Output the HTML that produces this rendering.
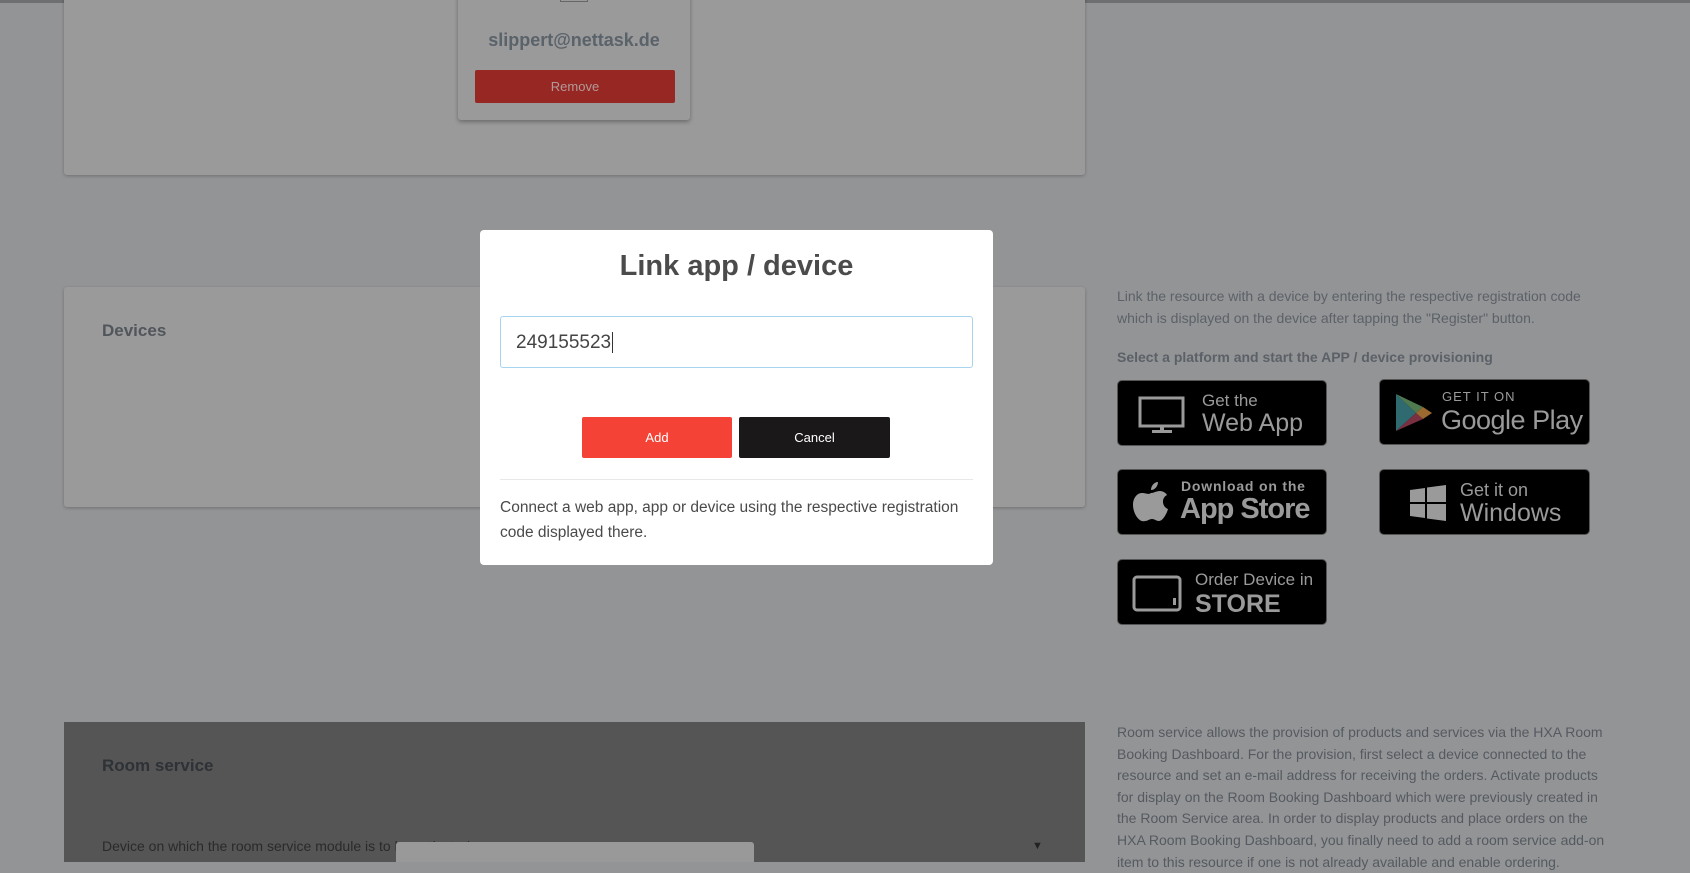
<!DOCTYPE html>
<html><head><meta charset="utf-8"><style>
*{box-sizing:border-box;margin:0;padding:0}
body{width:1690px;height:856px;overflow:hidden;background:#939496;font-family:"Liberation Sans",Roboto,sans-serif;position:relative}
.a{position:absolute}
.card{background:#9a9a9a;border-radius:3px;box-shadow:0 1px 3px rgba(0,0,0,.25)}
.badge{position:absolute;background:#000;border-radius:5px;border:1px solid #555;color:#9a9a9a;font-family:"Liberation Sans",sans-serif;white-space:nowrap}
.badge div{white-space:nowrap}
.rt{color:#5c6168;font-size:14px;line-height:21.6px}
</style></head><body>
<div class="a" style="left:0;top:0;width:1690px;height:3px;background:#6e6f71"></div>
<div class="a card" style="left:64px;top:-10px;width:1021px;height:185px"></div>
<div class="a card" style="left:458px;top:-10px;width:232px;height:130px;box-shadow:0 2px 4px rgba(0,0,0,.3)"></div>
<div class="a" style="left:560px;top:-2px;width:28px;height:4px;border:1px solid #666;border-top:none"></div>
<div class="a" style="left:458px;top:30px;width:232px;text-align:center;font-size:18px;font-weight:bold;color:#5a626a">slippert@nettask.de</div>
<div class="a" style="left:475px;top:70px;width:200px;height:33px;background:#962723;border-radius:2px;color:#b39a98;font-size:13px;text-align:center;line-height:33px">Remove</div>

<div class="a card" style="left:64px;top:287px;width:1021px;height:220px"></div>
<div class="a" style="left:102px;top:321px;font-size:17px;font-weight:bold;color:#50565c">Devices</div>

<div class="a" style="left:64px;top:722px;width:1021px;height:140px;background:#555"></div>
<div class="a" style="left:102px;top:756px;font-size:17px;font-weight:bold;color:#2e3236">Room service</div>
<div class="a" style="left:102px;top:838px;font-size:14px;color:#2a2a2a">Device on which the room service module is to be activated</div>
<div class="a" style="left:1032px;top:840px;font-size:11px;color:#222">▼</div>
<div class="a" style="left:396px;top:842px;width:358px;height:20px;background:#999;border-radius:3px 3px 0 0"></div>

<div class="a rt" style="left:1117px;top:286px;width:500px">Link the resource with a device by entering the respective registration code which is displayed on the device after tapping the "Register" button.</div>
<div class="a rt" style="left:1117px;top:347px;font-weight:bold">Select a platform and start the APP / device provisioning</div>

<div class="badge" style="left:1117px;top:380px;width:210px;height:66px">
<svg class="a" style="left:20px;top:15px" width="48" height="38" viewBox="0 0 48 38"><rect x="2" y="2" width="43" height="28" fill="none" stroke="#9a9a9a" stroke-width="3"/><rect x="22" y="30" width="4" height="4" fill="#9a9a9a"/><rect x="14" y="34" width="20" height="3" fill="#9a9a9a"/></svg>
<div class="a" style="left:84px;top:10px;font-size:17px">Get the</div>
<div class="a" style="left:84px;top:28px;font-size:25px">Web App</div></div>

<div class="badge" style="left:1379px;top:379px;width:211px;height:66px">
<svg class="a" style="left:14px;top:12px" width="40" height="42" viewBox="0 0 40 42"><polygon points="2,2 2,39 22,21" fill="#2e6a70"/><polygon points="2,2 22,21 29,15" fill="#4f7a50"/><polygon points="2,39 22,21 29,27" fill="#7a3040"/><polygon points="22,21 29,15 38,21 29,27" fill="#9a6a30"/></svg>
<div class="a" style="left:62px;top:9px;font-size:13px;letter-spacing:1px">GET IT ON</div>
<div class="a" style="left:61px;top:25px;font-size:27px;letter-spacing:-.5px">Google Play</div></div>

<div class="badge" style="left:1117px;top:469px;width:210px;height:66px">
<svg class="a" style="left:15px;top:10px" width="36" height="44" viewBox="0 0 36 44"><path d="M25 2c0 4-3 8-7 8 0-4 3-8 7-8zM18 13c3 0 5-2 9-2 3 0 6 2 7 4-6 3-5 12 1 14-1 4-5 12-9 12-3 0-4-2-7-2s-4 2-7 2C6 43 0 33 0 25c0-7 4-12 9-12 4 0 6 2 9 0z" fill="#9a9a9a"/></svg>
<div class="a" style="left:63px;top:8px;font-size:14px;letter-spacing:.8px;font-weight:bold">Download on the</div>
<div class="a" style="left:62px;top:23px;font-size:29px;font-weight:bold;letter-spacing:-1px">App Store</div></div>

<div class="badge" style="left:1379px;top:469px;width:211px;height:66px">
<svg class="a" style="left:30px;top:15px" width="37" height="37" viewBox="0 0 37 37"><path d="M0 5l15-2v14H0zM17 2.5L36 0v17H17zM0 19h15v14L0 31zM17 19h19v17l-19-2.5z" fill="#9a9a9a"/></svg>
<div class="a" style="left:80px;top:10px;font-size:18px">Get it on</div>
<div class="a" style="left:80px;top:29px;font-size:25px">Windows</div></div>

<div class="badge" style="left:1117px;top:559px;width:210px;height:66px">
<svg class="a" style="left:14px;top:15px" width="52" height="38" viewBox="0 0 52 38"><rect x="2" y="2" width="46" height="33" rx="3" fill="none" stroke="#9a9a9a" stroke-width="3"/><rect x="41" y="23" width="3" height="7" fill="#9a9a9a"/></svg>
<div class="a" style="left:77px;top:10px;font-size:17px">Order Device in</div>
<div class="a" style="left:77px;top:30px;font-size:25px;font-weight:bold">STORE</div></div>

<div class="a rt" style="left:1117px;top:722px;width:490px;color:#555a60">Room service allows the provision of products and services via the HXA Room Booking Dashboard. For the provision, first select a device connected to the resource and set an e-mail address for receiving the orders. Activate products for display on the Room Booking Dashboard which were previously created in the Room Service area. In order to display products and place orders on the HXA Room Booking Dashboard, you finally need to add a room service add-on item to this resource if one is not already available and enable ordering.</div>

<div class="a" style="left:480px;top:230px;width:513px;height:335px;background:#fff;border-radius:4px">
<div class="a" style="left:0;top:20px;width:513px;text-align:center;font-size:29px;font-weight:bold;color:#4b4b4b">Link app / device</div>
<div class="a" style="left:20px;top:86px;width:473px;height:52px;border:1px solid #a8d4f0;border-radius:3px;font-size:19px;color:#444;padding:15px 0 0 15px">249155523<span style="border-left:1px solid #333;margin-left:1px"></span></div>
<div class="a" style="left:102px;top:187px;width:150px;height:41px;background:#f44236;border-radius:2px;color:#fff;font-size:13px;text-align:center;line-height:41px">Add</div>
<div class="a" style="left:259px;top:187px;width:151px;height:41px;background:#1b181a;border-radius:2px;color:#fff;font-size:13px;text-align:center;line-height:41px">Cancel</div>
<div class="a" style="left:20px;top:249px;width:473px;height:1px;background:#e8e8e8"></div>
<div class="a" style="left:20px;top:266px;width:480px;font-size:15.5px;line-height:24.5px;color:#4a4a4a">Connect a web app, app or device using the respective registration code displayed there.</div>
</div>
</body></html>
